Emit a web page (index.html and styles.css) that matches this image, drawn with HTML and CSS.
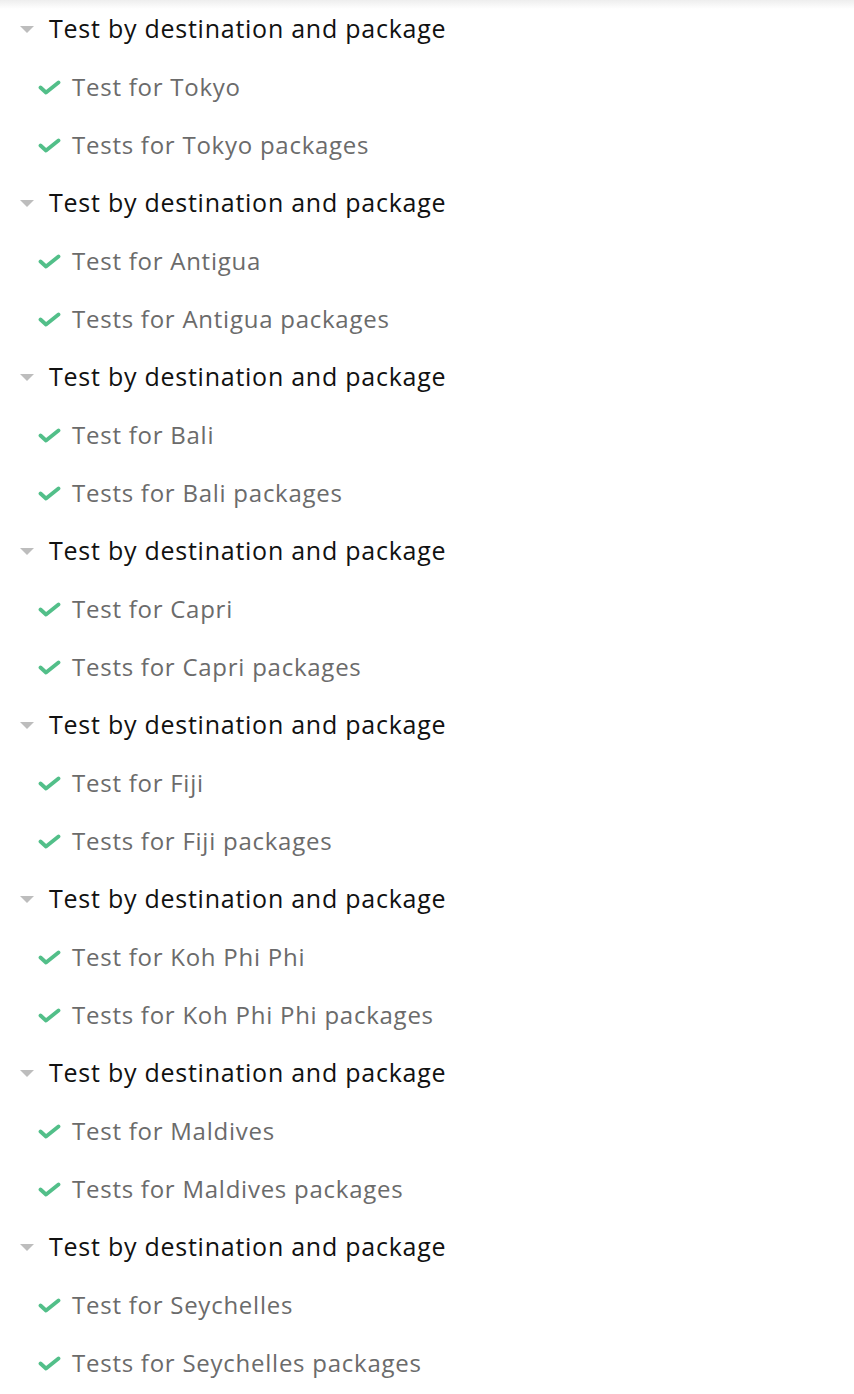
FILE: index.html
```html
<!DOCTYPE html>
<html>
<head>
<meta charset="utf-8">
<link rel="stylesheet" href="styles.css">
</head>
<body>
<div class="tree" id="tree"></div>
<script src="app.js"></script>
</body>
</html>
```

FILE: styles.css
```css
html, body {
  margin: 0;
  padding: 0;
  background: #fff;
}
body {
  background: linear-gradient(#eeeeee, #ffffff 9px) no-repeat;
  font-family: "Open Sans", "Noto Sans", sans-serif;
}
.tree {
  display: flex;
  flex-direction: column;
}
.row {
  height: 58px;
  display: flex;
  align-items: center;
  letter-spacing: 0.75px;
}
.row span {
  position: relative;
  top: -1px;
}
.group-head {
  padding-left: 20px;
  color: #111;
  font-size: 25px;
}
.caret {
  width: 14px;
  height: 7px;
  margin-right: 15px;
  flex: none;
}
.item {
  padding-left: 38px;
  color: #6b6b6b;
  font-size: 24px;
}
.check {
  width: 23px;
  height: 15px;
  margin-right: 11px;
  flex: none;
}
```

FILE: app.js
```js
const places = ["Tokyo","Antigua","Bali","Capri","Fiji","Koh Phi Phi","Maldives","Seychelles"];
const tree = document.getElementById("tree");
const caret = '<svg class="caret" viewBox="0 0 14 7"><path d="M0 0H14L7 7Z" fill="#bdbdbd"/></svg>';
const check = '<svg class="check" viewBox="0 0 23 15"><path d="M2.5 7.5L8 12.5L20.5 2.5" fill="none" stroke="#52bf89" stroke-width="3.8" stroke-linecap="round" stroke-linejoin="round"/></svg>';
for (const p of places) {
  const h = document.createElement("div");
  h.className = "row group-head";
  h.innerHTML = caret + '<span>Test by destination and package</span>';
  tree.appendChild(h);
  for (const t of ["Test for " + p, "Tests for " + p + " packages"]) {
    const r = document.createElement("div");
    r.className = "row item";
    r.innerHTML = check + '<span></span>';
    r.querySelector("span").textContent = t;
    tree.appendChild(r);
  }
}
```
